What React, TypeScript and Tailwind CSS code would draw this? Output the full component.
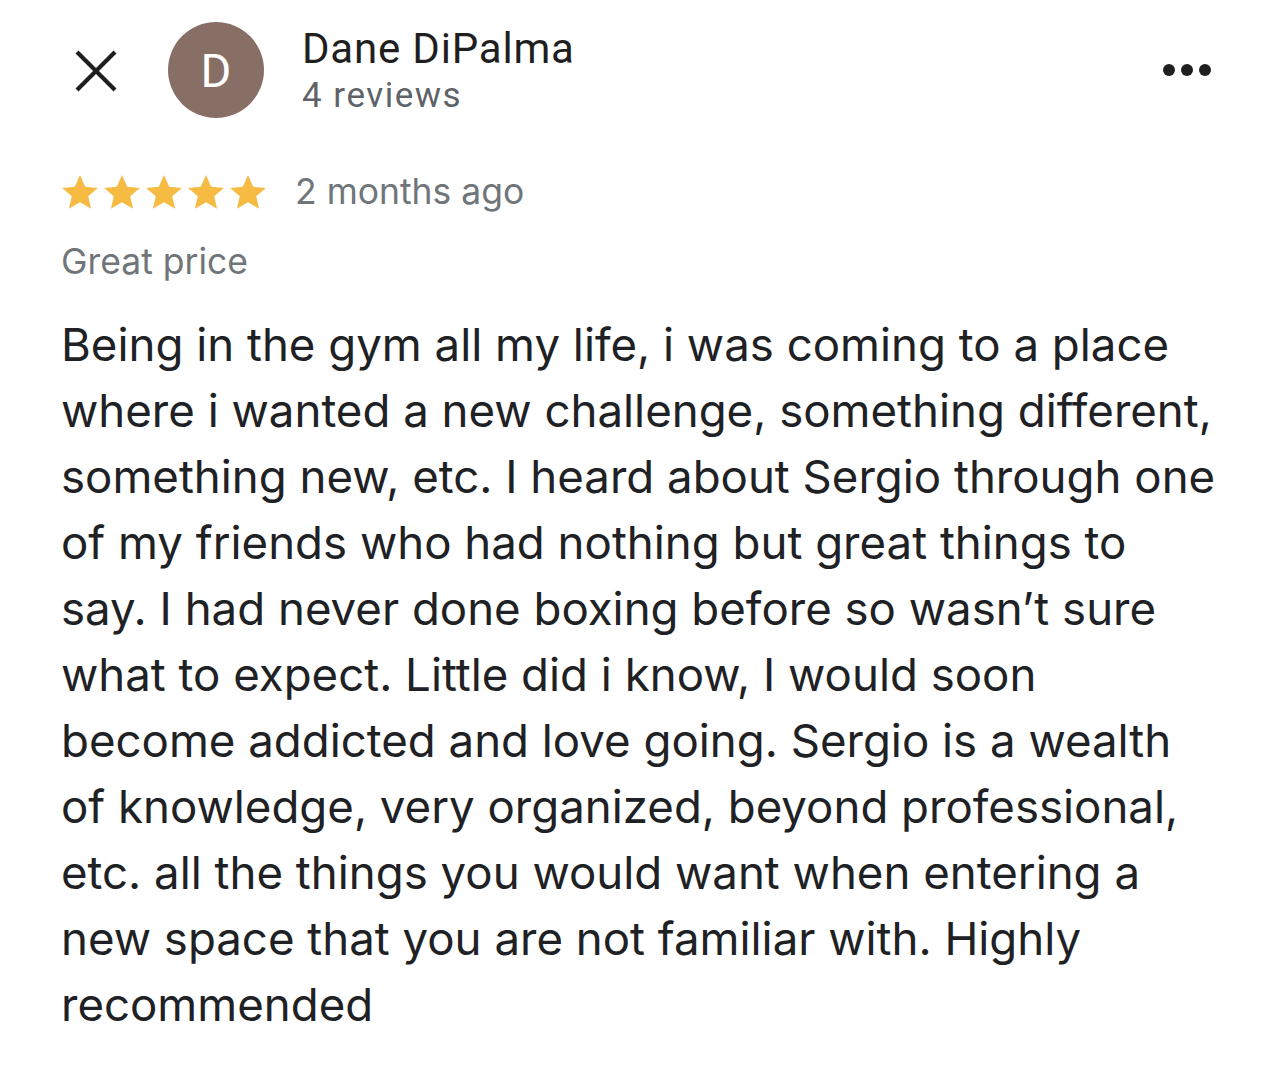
const lines = [
  "Being in the gym all my life, i was coming to a place",
  "where i wanted a new challenge, something different,",
  "something new, etc. I heard about Sergio through one",
  "of my friends who had nothing but great things to",
  "say. I had never done boxing before so wasn\u2019t sure",
  "what to expect. Little did i know, I would soon",
  "become addicted and love going. Sergio is a wealth",
  "of knowledge, very organized, beyond professional,",
  "etc. all the things you would want when entering a",
  "new space that you are not familiar with. Highly",
  "recommended",
];

function Star() {
  return (
    <svg viewBox="2 2.5 20 19" className="w-[36px] h-[34px]">
      <path
        fill="#f6bb43"
        d="M12 2.5l2.9 6.6 7.1.6-5.4 4.7 1.6 7-6.2-3.7-6.2 3.7 1.6-7L2 9.7l7.1-.6z"
      />
    </svg>
  );
}

export default function App() {
  return (
    <div className="w-[1284px] h-[1072px] bg-white overflow-hidden font-['Inter',sans-serif]">
      {/* Header */}
      <div className="flex items-start pl-[74px] pr-[73px] pt-[22px]">
        <svg viewBox="0 0 44 44" className="w-[44px] h-[44px] mt-[27px]">
          <path d="M3 3L41 41M41 3L3 41" stroke="#1f1f1f" strokeWidth="4.2" />
        </svg>
        <div className="ml-[50px] w-[96px] h-[96px] rounded-full bg-[#876f66] flex items-center justify-center">
          <span className="text-white text-[47px] font-['Roboto'] leading-none">D</span>
        </div>
        <div className="ml-[38px] mt-[3px] flex flex-col font-['Roboto']">
          <span className="text-[42px] leading-[48px] tracking-[0.8px] text-[#1f1f1f]">Dane DiPalma</span>
          <span className="mt-[1px] text-[35px] leading-[44px] text-[#5f6368] tracking-[1.5px]">4 reviews</span>
        </div>
        <div className="ml-auto flex gap-[6px] mt-[42px]">
          <span className="w-[12px] h-[12px] rounded-full bg-[#1f1f1f]" />
          <span className="w-[12px] h-[12px] rounded-full bg-[#1f1f1f]" />
          <span className="w-[12px] h-[12px] rounded-full bg-[#1f1f1f]" />
        </div>
      </div>

      {/* Rating */}
      <div className="flex items-center pl-[62px] mt-[54px]">
        <div className="flex gap-[6px]">
          <Star />
          <Star />
          <Star />
          <Star />
          <Star />
        </div>
        <span className="ml-[29px] text-[35.5px] leading-[40px] text-[#70757a]">2 months ago</span>
      </div>
      <div className="pl-[61px] mt-[30px] text-[35.5px] leading-[40px] text-[#70757a]">Great price</div>

      {/* Body */}
      <div className="pl-[61px] mt-[30px] text-[45.6px] leading-[66px] text-[#202124]">
        {lines.map((l) => (
          <div key={l} className="whitespace-nowrap">
            {l}
          </div>
        ))}
      </div>
    </div>
  );
}
